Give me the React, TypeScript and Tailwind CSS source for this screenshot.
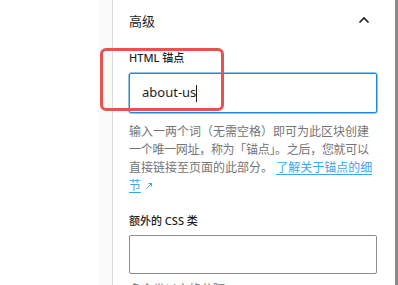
import React from "react";

export default function App() {
  const font = { fontFamily: '"Noto Sans", "Noto Sans CJK SC", sans-serif' };
  return (
    <div className="relative w-[398px] h-[285px] overflow-hidden bg-white flex text-[#1e1e1e]" style={font}>
      <div className="w-[98px] shrink-0 bg-white" />
      <div className="w-[14px] shrink-0 bg-[#fafafa]" />
      <div className="w-px shrink-0 bg-[#dcdcdc]" />
      <div className="flex-1 pl-[16px] pr-[18px]">
        <div className="flex items-center justify-between pt-[11px] h-[20px] box-content">
          <span className="text-[13px] leading-[20px]">高级</span>
          <svg width="12" height="8" viewBox="0 0 12 8" className="mr-[7px] mt-[-3px]">
            <path d="M1.5 6.5 L6 2 L10.5 6.5" fill="none" stroke="#1e1e1e" strokeWidth="1.6" />
          </svg>
        </div>
        <div className="mt-[20px] text-[11px] leading-[14px] font-medium">HTML 锚点</div>
        <div className="mt-[8px] h-[40px] border-[1.5px] border-[#1e8ad6] rounded-[2px] flex items-center pl-[12px] shadow-[0_0_0_0.5px_#1e8ad6]">
          <span className="text-[13px]">about-us</span>
          <span className="w-px h-[17px] bg-[#1e1e1e]" />
        </div>
        <div className="mt-[10px] text-[12px] leading-[18px] text-[#757575]">
          <div className="whitespace-nowrap">输入一两个词（无需空格）即可为此区块创建</div>
          <div className="whitespace-nowrap tracking-[-0.3px]">一个唯一网址，称为「锚点」。之后，您就可以</div>
          <div className="whitespace-nowrap">
            直接链接至页面的此部分。 <span className="text-[#3aa6ef] underline underline-offset-2">了解关于锚点的细</span>
          </div>
          <div className="whitespace-nowrap flex items-center">
            <span className="text-[#3aa6ef] underline underline-offset-2">节</span>
            <svg width="10" height="10" viewBox="0 0 10 10" className="ml-[3px]">
              <path d="M2.5 7.5 L7.5 2.5 M4.5 2.5 H7.5 V5.5" fill="none" stroke="#3aa6ef" strokeWidth="1" />
            </svg>
          </div>
        </div>
        <div className="mt-[19px] text-[11px] leading-[14px] font-medium">额外的 CSS 类</div>
        <div className="mt-[7px] h-[39px] border border-[#8c8c8c] rounded-[2px]" />
        <div className="mt-[7px] text-[12px] leading-[18px] text-[#757575]">多个类以空格分隔。</div>
      </div>
      <div className="w-[3px] shrink-0 bg-[#8a8a8a]" />
      <div className="absolute left-[100px] top-[48px] w-[124px] h-[63px] border-[3px] border-[#e8534f] rounded-[6px]" />
    </div>
  );
}
